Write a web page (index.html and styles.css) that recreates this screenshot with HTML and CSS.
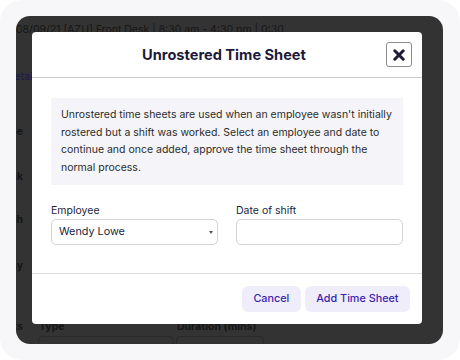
FILE: index.html
```html
<!DOCTYPE html>
<html>
<head>
<title>Unrostered Time Sheet</title>
<link rel="stylesheet" href="styles.css">
</head>
<body>

<div class="frame">
    <div class="screen">
        <div class="page">
            <div class="page-title">08/09/21 [AZU] Front Desk | 8:30 am - 4:30 pm | 0:30</div>
            <div class="page-link">Details</div>
            <div class="page-label row-a">Type</div>
            <div class="page-label row-b">Break</div>
            <div class="page-label row-c">Finish</div>
            <div class="page-label row-d">Day</div>
            <div class="page-bottom">
                <div class="page-label">Breaks</div>
                <div class="page-field wide">
                    <div class="page-field-label">Type</div>
                    <div class="page-input"></div>
                </div>
                <div class="page-field short">
                    <div class="page-field-label">Duration (mins)</div>
                    <div class="page-input"></div>
                </div>
            </div>
        </div>

        <div class="modal">
            <div class="modal-header">
                <h1>Unrostered Time Sheet</h1>
                <button class="close">
                    <svg width="12" height="12" viewBox="0 0 12 12"><path d="M1.8 1.8 L10.2 10.2 M10.2 1.8 L1.8 10.2" stroke="#1d1a3a" stroke-width="3" stroke-linecap="round"/></svg>
                </button>
            </div>
            <div class="modal-body">
                <p class="info">Unrostered time sheets are used when an employee wasn't initially rostered but a shift was worked. Select an employee and date to continue and once added, approve the time sheet through the normal process.</p>
                <div class="fields">
                    <div class="field">
                        <label>Employee</label>
                        <div class="select">Wendy Lowe<span class="caret"></span></div>
                    </div>
                    <div class="field">
                        <label>Date of shift</label>
                        <div class="input"></div>
                    </div>
                </div>
            </div>
            <div class="modal-footer">
                <button class="btn">Cancel</button>
                <button class="btn">Add Time Sheet</button>
            </div>
        </div>
    </div>
</div>

</body>
</html>
```

FILE: styles.css
```css
body {
    margin: 0;
    background-color: #ffffff;
    font-family: Inter, "Noto Sans", sans-serif;
}
.frame {
    width: 460px;
    height: 360px;
    box-sizing: border-box;
    padding: 16px 17px 16px 16px;
    background-color: #f7f7fa;
    border-radius: 22px;
}
.screen {
    position: relative;
    height: 328px;
    background-color: #333333;
    border-radius: 14px;
    overflow: hidden;
}

/* page behind the overlay */
.page {
    color: #161616;
    font-size: 10.5px;
    line-height: 14px;
}
.page-title {
    white-space: nowrap;
    padding-top: 7px;
}
.page-link {
    margin-left: -9px;
    margin-top: 33px;
    color: #1c1850;
}
.page-label {
    width: 7px;
    display: flex;
    justify-content: flex-end;
    white-space: nowrap;
    font-weight: 700;
}
.row-a { margin-top: 41px; }
.row-b { margin-top: 31px; }
.row-c { margin-top: 29px; }
.row-d { margin-top: 32px; }
.page-bottom {
    display: flex;
    margin-top: 47px;
}
.page-field-label {
    font-weight: 700;
    padding-left: 1px;
}
.page-field.wide {
    width: 136px;
    margin-left: 15px;
}
.page-field.short {
    width: 88px;
    margin-left: 2px;
}
.page-input {
    margin-top: 2px;
    height: 26px;
    border: 1px solid #2a2a2a;
    border-radius: 5px;
}

/* modal */
.modal {
    position: absolute;
    top: 16px;
    left: 16px;
    width: 390px;
    height: 292px;
    background-color: #ffffff;
    border-radius: 4px;
    display: flex;
    flex-direction: column;
}
.modal-header {
    height: 46px;
    box-sizing: border-box;
    padding-right: 6px;
    border-bottom: 1px solid #cccccc;
    display: flex;
    align-items: center;
    justify-content: center;
    position: relative;
}
.modal-header h1 {
    margin: 0;
    font-size: 14.6px;
    font-weight: 700;
    color: #1d1a3a;
}
.close {
    position: absolute;
    right: 10px;
    top: 10px;
    width: 26px;
    height: 25px;
    padding: 0;
    border: 1px solid #8d8d8d;
    border-radius: 3px;
    background-color: #ffffff;
    display: flex;
    align-items: center;
    justify-content: center;
}
.modal-body {
    padding: 20px 19px 0 19px;
    height: 175px;
    border-bottom: 1px solid #dddddd;
}
.info {
    margin: 0;
    padding: 8px 10px 8px 10px;
    background-color: #f5f5f9;
    color: #2b2b2b;
    font-size: 10.5px;
    line-height: 17.7px;
}
.fields {
    display: flex;
    gap: 18px;
    margin-top: 19px;
}
.field {
    flex: 1;
}
.field label {
    display: block;
    font-size: 10.5px;
    line-height: 14px;
    color: #231f3a;
    margin-bottom: 1px;
}
.select, .input {
    box-sizing: border-box;
    height: 26px;
    border: 1px solid #d4d4d8;
    border-radius: 5px;
}
.select {
    position: relative;
    padding-left: 7px;
    font-size: 10.8px;
    line-height: 24px;
    color: #142640;
}
.caret {
    position: absolute;
    right: 4px;
    top: 11px;
    width: 0;
    height: 0;
    border-left: 2.5px solid transparent;
    border-right: 2.5px solid transparent;
    border-top: 3px solid #555555;
}
.modal-footer {
    flex: 1;
    display: flex;
    justify-content: flex-end;
    align-items: center;
    gap: 4px;
    padding-right: 12px;
    padding-bottom: 1px;
}
.btn {
    height: 26px;
    padding: 0 11.5px;
    border: none;
    border-radius: 6px;
    background-color: #efedfa;
    color: #3a1fae;
    font-family: Inter, "Noto Sans", sans-serif;
    font-size: 10.8px;
    font-weight: 500;
}
```
